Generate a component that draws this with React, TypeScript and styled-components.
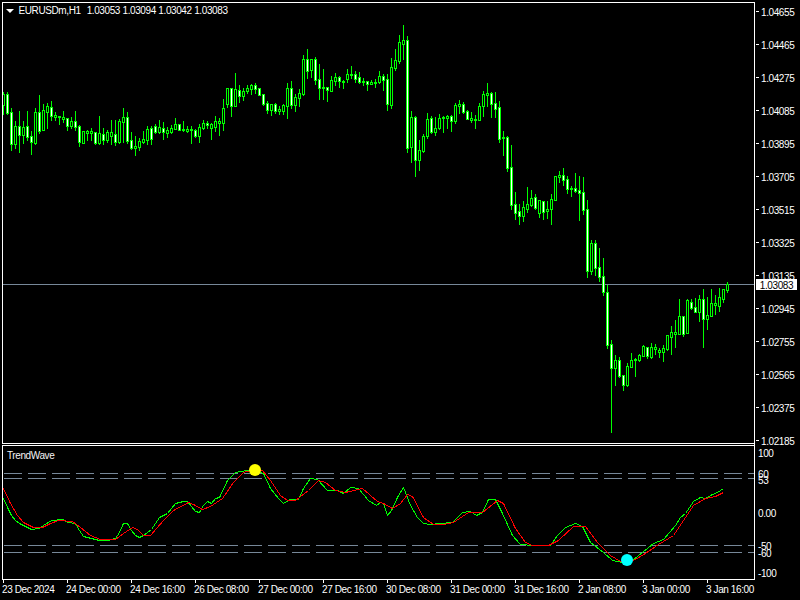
import React from "react";
import styled, { createGlobalStyle } from "styled-components";

// [high, body top, body bottom, low, filled] in screen pixels, one row per bar, 4px apart
const BARS: number[][] = [
  [92,94,105,114,0],[92,94,113,114,1],[108,112,144,150,1],[121,126,144,148,0],[111,126,135,152,1],[121,127,135,143,0],
  [111,126,137,140,1],[131,136,142,154,1],[108,112,143,144,0],[95,112,131,133,1],[104,110,130,130,0],[103,106,112,128,0],
  [101,107,116,120,1],[112,115,117,120,0],[116,116,117,124,0],[111,117,119,122,0],[118,118,126,130,1],[117,121,126,128,0],
  [111,121,127,130,1],[125,126,142,146,1],[131,131,143,143,0],[130,131,133,140,0],[128,131,133,140,0],[132,132,143,144,1],
  [116,133,143,144,0],[128,134,140,144,1],[130,132,140,142,0],[120,132,136,144,0],[120,134,142,145,1],[119,121,142,143,0],
  [108,117,122,142,0],[112,117,141,143,1],[132,140,148,149,1],[136,146,148,155,0],[138,141,147,150,0],[131,139,142,143,0],
  [126,129,140,144,0],[126,128,139,144,1],[124,126,132,133,1],[120,127,132,133,0],[122,128,132,139,1],[127,130,133,137,0],
  [125,128,132,133,0],[118,124,129,129,0],[124,124,130,130,1],[121,129,130,131,0],[126,129,131,132,0],[126,129,130,143,0],
  [129,130,136,137,1],[124,127,136,142,0],[120,123,128,129,0],[121,123,125,128,1],[123,124,128,139,0],[116,121,127,131,0],
  [118,121,123,135,0],[99,108,123,130,0],[88,88,104,107,0],[88,88,106,116,1],[73,89,106,106,0],[85,90,96,102,1],
  [88,91,96,100,0],[85,88,91,93,0],[84,85,89,94,0],[83,85,89,93,1],[88,88,95,95,1],[94,94,104,105,1],
  [101,103,110,113,1],[104,104,110,115,0],[103,104,111,113,1],[106,109,111,114,0],[104,105,111,114,0],[83,88,106,118,0],
  [81,88,105,108,1],[94,97,105,111,0],[89,93,98,106,0],[55,59,94,95,0],[49,59,71,78,1],[59,59,70,77,0],
  [57,59,80,84,1],[64,79,88,99,1],[69,87,88,99,0],[87,87,90,101,1],[76,80,91,91,0],[73,77,81,85,0],
  [76,77,81,87,1],[80,81,82,88,0],[69,74,79,82,0],[66,74,75,78,0],[71,74,79,82,1],[72,77,82,83,1],
  [78,81,82,85,0],[81,81,84,90,1],[80,82,84,84,0],[79,82,83,87,0],[71,76,82,83,0],[74,76,80,90,1],
  [74,79,104,110,1],[58,67,105,108,0],[49,60,68,70,0],[35,42,61,63,0],[25,40,44,59,0],[36,40,148,152,1],
  [111,117,147,162,0],[116,117,160,176,1],[140,150,160,170,0],[134,136,151,152,0],[113,119,136,138,0],[116,118,132,133,1],
  [117,128,132,135,0],[114,118,128,129,0],[116,117,118,132,0],[115,116,118,128,0],[115,116,121,131,1],[103,105,121,123,0],
  [100,104,106,113,0],[102,104,112,113,1],[110,111,119,119,1],[112,118,120,122,0],[115,119,120,128,0],[103,106,120,120,0],
  [91,94,106,116,0],[83,93,95,106,0],[92,93,104,117,1],[92,103,109,117,1],[101,107,139,142,1],[131,137,138,155,0],
  [136,137,168,171,1],[145,167,205,209,1],[192,204,213,219,1],[204,211,216,224,1],[201,207,216,221,0],[187,204,209,212,0],
  [190,198,205,206,0],[194,197,208,209,1],[200,200,213,217,0],[201,201,212,219,1],[201,209,211,218,0],[194,199,209,224,0],
  [176,176,200,200,0],[171,175,177,182,0],[168,175,180,185,1],[176,179,189,193,1],[186,188,189,196,0],[173,188,191,192,1],
  [176,190,193,220,1],[177,192,210,214,1],[200,209,271,277,1],[240,243,271,274,0],[240,243,268,275,1],[248,267,277,281,1],
  [258,276,292,295,1],[285,292,345,348,1],[340,344,368,432,1],[355,360,368,385,0],[357,360,376,377,1],[375,375,385,390,1],
  [363,366,385,386,0],[353,360,367,367,0],[358,359,360,376,0],[354,355,360,361,0],[345,346,356,356,0],[347,347,356,358,1],
  [343,347,357,358,0],[344,347,349,354,0],[348,350,352,357,0],[345,348,352,361,0],[335,335,349,350,0],[326,332,337,354,0],
  [320,332,334,347,0],[299,316,334,334,0],[316,316,334,336,1],[299,300,333,333,0],[299,302,308,309,1],[298,307,312,312,1],
  [295,299,312,321,0],[289,299,319,347,1],[297,315,319,329,0],[289,303,316,316,0],[295,303,305,314,0],[288,297,306,311,0],
  [289,289,299,302,0],[282,284,290,292,0],
];

const GREEN_LINE = [
  [3,498],[7,507],[11,515],[15,520],[19,523],[23,525],[31,529],[39,528],[43,525],[51,520],[63,519],[67,522],[75,523],[79,530],[83,536],[91,538],[99,540],[107,540],[115,538],[119,532],[123,523],[127,523],[131,530],[135,535],[139,537],[143,535],[151,529],[159,517],[167,513],[175,503],[183,501],[187,501],[195,511],[199,512],[203,505],[207,501],[211,503],[215,498],[219,497],[227,480],[235,472],[247,470],[255,470],[263,473],
  [270,488],[278,498],[283,503],[290,499],[298,499],[303,488],[310,478],[317,479],[327,490],[337,490],[343,493],[350,487],[358,488],[368,500],[376,505],[380,502],[383,503],[387,515],[391,510],[397,497],[403,487],[410,505],[417,517],[423,523],[430,524],[440,523],[452,522],[462,512],[470,511],[476,515],[482,512],[488,499],[495,499],[502,513],[512,535],[520,544],[532,545],
  [550,545],[557,535],[565,527],[575,523],[582,526],[590,542],[603,552],[612,560],[622,562],[632,560],[653,543],[663,539],[675,525],[680,517],[685,513],[693,501],[700,497],[705,498],[712,494],[717,492],[723,488],
];

const RED_LINE = [
  [3,488],[10,503],[17,515],[23,522],[33,527],[42,527],[50,523],[58,520],[72,521],[80,527],[90,535],[100,539],[115,539],[123,533],[132,527],[137,529],[143,535],[150,535],[163,520],[173,510],[188,502],[193,504],[202,509],[210,506],[222,498],[233,482],[243,472],[250,470],[262,470],[270,480],
  [280,495],[287,500],[295,500],[308,490],[318,480],[325,482],[335,490],[345,492],[362,488],[377,501],[383,503],[392,508],[400,503],[407,494],[412,496],[423,517],[433,524],[443,524],[453,522],[468,512],[482,512],[497,500],[503,503],[515,528],[525,542],[532,545],
  [548,545],[558,540],[573,526],[585,526],[597,542],[610,555],[620,561],[633,560],[645,553],[658,544],[673,535],[693,505],[705,498],[715,496],[723,492],
];

const PRICES = ["1.04655","1.04465","1.04275","1.04085","1.03895","1.03705","1.03515","1.03325","1.03135","1.02945","1.02755","1.02565","1.02375","1.02185"];
const QUOTES = ["1.03053","1.03094","1.03042","1.03083"];
const LEVELS = [473, 478, 545, 552];
const INDICATOR_SCALE = [
  { label: "100", y: 452 },
  { label: "60", y: 473 },
  { label: "53", y: 479 },
  { label: "0.00", y: 512 },
  { label: "-50", y: 545 },
  { label: "-60", y: 552 },
  { label: "-100", y: 572 },
];
const TIMES = ["23 Dec 2024","24 Dec 00:00","24 Dec 16:00","26 Dec 08:00","27 Dec 00:00","27 Dec 16:00","30 Dec 08:00","31 Dec 00:00","31 Dec 16:00","2 Jan 08:00","3 Jan 00:00","3 Jan 16:00"];

const INDICATOR_TOP = 445;

const GlobalStyle = createGlobalStyle`
  html, body {
    margin: 0;
    background: #000;
  }
  body {
    font-family: "Liberation Sans", Arial, sans-serif;
    font-size: 10px;
    letter-spacing: -0.4px;
    color: #fff;
  }
`;

const Page = styled.div`
  width: 800px;
  height: 600px;
  box-sizing: border-box;
  padding: 2px 0 0 2px;
  background: #000;
  overflow: hidden;
`;

const Workspace = styled.div`
  display: flex;
`;

const PaneColumn = styled.div`
  width: 753px;
  box-sizing: border-box;
  border-right: 1px solid #fff;
  display: flex;
  flex-direction: column;
  gap: 1px;
`;

const Pane = styled.div<{ $height: number }>`
  position: relative;
  height: ${(p) => p.$height}px;
  box-sizing: border-box;
  border: 1px solid #fff;
  border-right: 0;
`;

const Plot = styled.svg`
  display: block;
  width: 100%;
  height: 100%;
`;

const Legend = styled.div`
  position: absolute;
  top: 1px;
  left: 3px;
  display: flex;
  align-items: center;
  gap: 2.5px;
  height: 13px;
  line-height: 13px;
  white-space: nowrap;
`;

const Caret = styled.span`
  width: 0;
  height: 0;
  margin-right: 2px;
  border-left: 4px solid transparent;
  border-right: 4px solid transparent;
  border-top: 4px solid #fff;
`;

const Symbol = styled.span`
  margin-right: 3.5px;
`;

const IndicatorName = styled.div`
  position: absolute;
  top: 3px;
  left: 4px;
  line-height: 13px;
  color: #f4f4f4;
`;

const ScaleColumn = styled.div`
  flex: 1;
  display: flex;
  flex-direction: column;
  gap: 1px;
`;

const PriceScale = styled.div`
  position: relative;
  height: 442px;
  box-sizing: border-box;
  padding-top: 3px;
  display: flex;
  flex-direction: column;
  gap: 20px;
`;

const PriceRow = styled.div`
  display: flex;
  align-items: center;
  height: 13px;
  &::before {
    content: "";
    width: 3px;
    height: 1px;
    margin: 0 2px 0 1px;
    background: #fff;
  }
`;

const PriceText = styled.span`
  padding-top: 2px;
  line-height: 13px;
`;

const PriceTag = styled.div`
  position: absolute;
  top: 277px;
  left: 1px;
  width: 41px;
  height: 11px;
  line-height: 13px;
  text-align: center;
  background: #fff;
  color: #000;
`;

const IndicatorScale = styled.div`
  position: relative;
  height: 135px;
`;

const ScaleLabel = styled.div<{ $y: number }>`
  position: absolute;
  left: 3px;
  top: ${(p) => p.$y - INDICATOR_TOP - 5}px;
  line-height: 13px;
`;

const TimeAxis = styled.div`
  display: flex;
  margin-left: 1px;
`;

const TimeCell = styled.div`
  width: 64px;
  flex: none;
  line-height: 13px;
  white-space: nowrap;
  &::before {
    content: "";
    display: block;
    width: 1px;
    height: 3px;
    background: #fff;
  }
`;

const TimeText = styled.span`
  display: block;
  margin-left: -1px;
`;

const Candles: React.FC = () => (
  <>
    {BARS.map(([high, top, bottom, low, filled], i) => {
      const x = 3 + 4 * i;
      const h = bottom - top + 1;
      return (
        <g key={i}>
          <rect x={x} y={high} width={1} height={low - high + 1} fill="#00ff00" />
          <rect x={x - 1} y={top} width={3} height={h} fill="#00ff00" />
          {h > 2 && <rect x={x} y={top + 1} width={1} height={h - 2} fill={filled ? "#ffffff" : "#000000"} />}
        </g>
      );
    })}
  </>
);

const App: React.FC = () => {
  return (
    <Page>
      <GlobalStyle />
      <Workspace>
        <PaneColumn>
          <Pane $height={442}>
            <Plot viewBox="3 3 751 440" shapeRendering="crispEdges">
              <rect x={3} y={284} width={751} height={1} fill="#778899" />
              <Candles />
            </Plot>
            <Legend>
              <Caret />
              <Symbol>EURUSDm,H1</Symbol>
              {QUOTES.map((q) => (
                <span key={q}>{q}</span>
              ))}
            </Legend>
          </Pane>
          <Pane $height={135}>
            <Plot viewBox="3 446 751 133" shapeRendering="crispEdges">
              {LEVELS.map((y) => (
                <line key={y} x1={4} x2={754} y1={y + 0.5} y2={y + 0.5} stroke="#778899" strokeDasharray="18 6" />
              ))}
              <g transform="translate(0.5 0.5)">
                <polyline points={GREEN_LINE.join(" ")} fill="none" stroke="#00ff00" />
                <polyline points={RED_LINE.join(" ")} fill="none" stroke="#ff0000" />
              </g>
              <circle cx={255} cy={470} r={6} fill="#ffff00" shapeRendering="auto" />
              <circle cx={627} cy={560} r={6} fill="#00ffff" shapeRendering="auto" />
            </Plot>
            <IndicatorName>TrendWave</IndicatorName>
          </Pane>
        </PaneColumn>
        <ScaleColumn>
          <PriceScale>
            {PRICES.map((p) => (
              <PriceRow key={p}>
                <PriceText>{p}</PriceText>
              </PriceRow>
            ))}
            <PriceTag>1.03083</PriceTag>
          </PriceScale>
          <IndicatorScale>
            {INDICATOR_SCALE.map((s) => (
              <ScaleLabel key={s.label} $y={s.y}>
                {s.label}
              </ScaleLabel>
            ))}
          </IndicatorScale>
        </ScaleColumn>
      </Workspace>
      <TimeAxis>
        {TIMES.map((t) => (
          <TimeCell key={t}>
            <TimeText>{t}</TimeText>
          </TimeCell>
        ))}
      </TimeAxis>
    </Page>
  );
};

export default App;
